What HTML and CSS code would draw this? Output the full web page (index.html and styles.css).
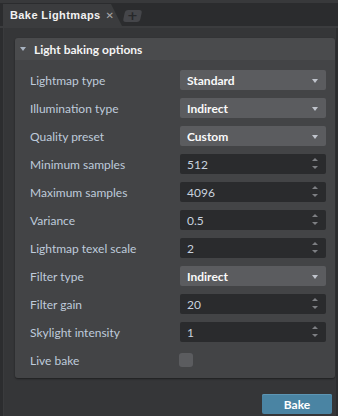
FILE: index.html
```html
<!DOCTYPE html>
<html lang="en">
<head>
  <meta charset="UTF-8" />
  <title>Bake Lightmaps</title>
  <link rel="stylesheet" href="styles.css">
</head>
<body>
  <div class="tabbar">
    <div class="tab">
      <span class="tab-title">Bake Lightmaps</span>
      <span class="tab-close">&#x2715;</span>
    </div>
    <div class="tab-add"><span>+</span></div>
  </div>

  <div class="main">
    <div class="group">
      <div class="group-head">
        <span class="caret"></span>
        <span>Light baking options</span>
      </div>
      <div class="group-body">
        <div class="row"><span class="label">Lightmap type</span><div class="select">Standard<span class="arrow"></span></div></div>
        <div class="row"><span class="label">Illumination type</span><div class="select">Indirect<span class="arrow"></span></div></div>
        <div class="row"><span class="label">Quality preset</span><div class="select">Custom<span class="arrow"></span></div></div>
        <div class="row"><span class="label">Minimum samples</span><div class="spin">512<span class="spin-btns"><i class="up"></i><i class="down"></i></span></div></div>
        <div class="row"><span class="label">Maximum samples</span><div class="spin">4096<span class="spin-btns"><i class="up"></i><i class="down"></i></span></div></div>
        <div class="row"><span class="label">Variance</span><div class="spin">0.5<span class="spin-btns"><i class="up"></i><i class="down"></i></span></div></div>
        <div class="row"><span class="label">Lightmap texel scale</span><div class="spin">2<span class="spin-btns"><i class="up"></i><i class="down"></i></span></div></div>
        <div class="row"><span class="label">Filter type</span><div class="select">Indirect<span class="arrow"></span></div></div>
        <div class="row"><span class="label">Filter gain</span><div class="spin">20<span class="spin-btns"><i class="up"></i><i class="down"></i></span></div></div>
        <div class="row"><span class="label">Skylight intensity</span><div class="spin">1<span class="spin-btns"><i class="up"></i><i class="down"></i></span></div></div>
        <div class="row"><span class="label">Live bake</span><div class="check"></div></div>
      </div>
    </div>

    <div class="actions">
      <button class="bake">Bake</button>
    </div>
  </div>
</body>
</html>
```

FILE: styles.css
```css
html, body {
  margin: 0;
  padding: 0;
}

body {
  width: 338px;
  height: 416px;
  overflow: hidden;
  background: #353638;
  font-family: Lato, 'Open Sans', sans-serif;
  font-size: 12px;
}

.tabbar {
  height: 23px;
  border-top: 3px solid #38393b;
  border-bottom: 2px solid #3b3c3e;
  background: #2b2c2e;
  display: flex;
  align-items: flex-end;
}

.tab {
  flex-shrink: 0;
  margin-left: 3px;
  width: 119px;
  height: 22px;
  background: #3b3c3e;
  clip-path: polygon(0 0, 108px 0, 119px 100%, 0 100%);
  display: flex;
  align-items: center;
  padding-left: 7px;
  box-sizing: border-box;
  white-space: nowrap;
}

.tab-title {
  font-family: 'Liberation Sans', sans-serif;
  font-weight: bold;
  font-size: 11px;
  color: #f2f2f2;
  letter-spacing: 0.4px;
}

.tab-close {
  margin-left: 5px;
  font-family: 'DejaVu Sans', sans-serif;
  font-size: 10px;
  color: #a8a8a8;
}

.tab-add {
  flex-shrink: 0;
  margin-left: 2px;
  margin-bottom: 4px;
  width: 17px;
  height: 12px;
  background: #45464a;
  border-radius: 3px;
  transform: skewX(-12deg);
  display: flex;
  align-items: center;
  justify-content: center;
}

.tab-add span {
  transform: skewX(12deg);
  font-family: 'DejaVu Sans', sans-serif;
  font-weight: bold;
  font-size: 13px;
  line-height: 12px;
  color: #27282a;
}

.main {
  height: 388px;
  border-left: 3px solid #2c2d2f;
  border-right: 2px solid #2c2d2f;
  box-shadow: inset 1px 0 0 #3a3b3d;
  padding: 10px 1px 0 12px;
  box-sizing: border-box;
}

.group {
  border-radius: 3px;
  box-shadow: 0 1px 2px rgba(0, 0, 0, 0.45);
  overflow: hidden;
}

.group-head {
  height: 22px;
  background: #4a4b4d;
  display: flex;
  align-items: center;
  padding-left: 5px;
  font-weight: bold;
  color: #f4f4f4;
}

.caret {
  width: 0;
  height: 0;
  border-left: 3.5px solid transparent;
  border-right: 3.5px solid transparent;
  border-top: 4px solid #a9b4c2;
  margin-right: 8px;
}

.group-body {
  background: #434446;
  padding: 10px 9px 8px 15px;
  display: flex;
  flex-direction: column;
  gap: 8px;
}

.row {
  height: 20px;
  display: flex;
  align-items: center;
}

.label {
  width: 150px;
  color: #bfcbdb;
}

.select, .spin {
  width: 146px;
  height: 20px;
  border-radius: 2px;
  box-sizing: border-box;
  padding-left: 7px;
  display: flex;
  align-items: center;
  position: relative;
}

.select {
  background: #5b5c5f;
  color: #fafafa;
  font-weight: bold;
}

.spin {
  background: #2a2b2d;
  color: #c8d2de;
}

.arrow {
  position: absolute;
  right: 8px;
  top: 9px;
  width: 0;
  height: 0;
  border-left: 3px solid transparent;
  border-right: 3px solid transparent;
  border-top: 4px solid #c0c4cc;
}

.spin-btns {
  position: absolute;
  right: 8px;
  top: 4px;
  display: flex;
  flex-direction: column;
  gap: 5px;
}

.spin-btns i {
  width: 0;
  height: 0;
  border-left: 3px solid transparent;
  border-right: 3px solid transparent;
}

.spin-btns .up {
  border-bottom: 3px solid #7d7f83;
}

.spin-btns .down {
  border-top: 3px solid #7d7f83;
}

.check {
  width: 14px;
  height: 14px;
  border-radius: 3px;
  background: #5b5c5f;
  margin-left: -1px;
}

.actions {
  display: flex;
  justify-content: flex-end;
  padding-top: 16px;
  padding-right: 3px;
}

.bake {
  width: 70px;
  height: 20px;
  border: none;
  border-radius: 2px;
  background: #4a84a3;
  box-shadow: inset 0 1px 0 #5d96b4;
  color: #ffffff;
  font-family: Lato, 'Open Sans', sans-serif;
  font-weight: bold;
  font-size: 12px;
  padding: 0;
}
```
